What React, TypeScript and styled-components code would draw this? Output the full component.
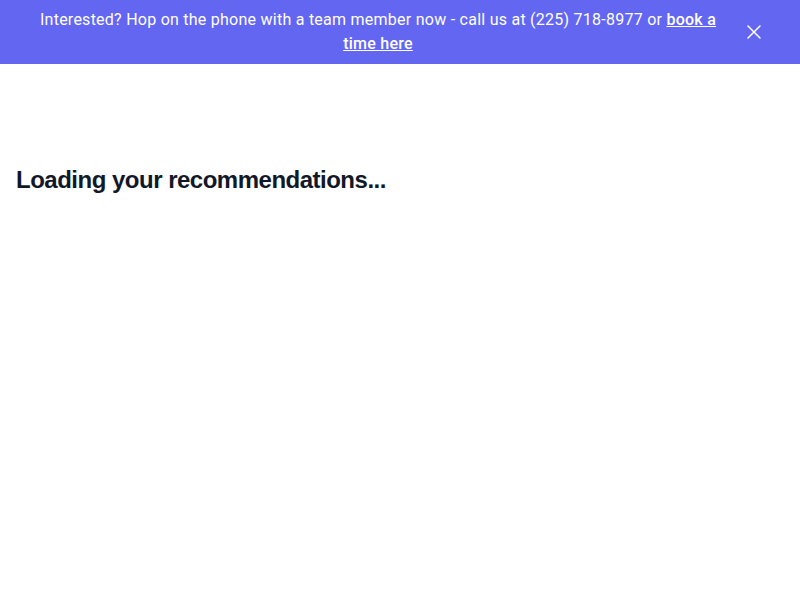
import React, { useState } from "react";
import styled, { createGlobalStyle } from "styled-components";

const GlobalStyle = createGlobalStyle`
  body {
    margin: 0;
    background: #ffffff;
    font-family: Roboto, Inter, "Noto Sans", sans-serif;
  }
`;

const Banner = styled.div`
  display: flex;
  align-items: center;
  height: 64px;
  padding: 0 24px 0 32px;
  background-color: #6366f1;
  color: #ffffff;
  box-sizing: border-box;
`;

const BannerText = styled.p`
  flex: 1;
  margin: 0;
  padding-right: 18px;
  text-align: center;
  font-size: 16px;
  line-height: 24px;
  letter-spacing: 0.25px;

  a {
    color: #ffffff;
    font-weight: 500;
    text-decoration: underline;
  }
`;

const CloseButton = styled.button`
  display: flex;
  align-items: center;
  justify-content: center;
  width: 24px;
  height: 24px;
  padding: 0;
  margin-right: 10px;
  background: none;
  border: none;
  color: #ffffff;
  cursor: pointer;
`;

const Main = styled.main`
  padding: 100px 16px 0;
`;

const Heading = styled.h1`
  margin: 0;
  font-family: "Liberation Sans", Arial, sans-serif;
  font-size: 24px;
  line-height: 32px;
  font-weight: 700;
  letter-spacing: -0.5px;
  color: #111827;
`;

const App: React.FC = () => {
  const [open, setOpen] = useState(true);

  return (
    <>
      <GlobalStyle />
      {open && (
        <Banner>
          <BannerText>
            Interested? Hop on the phone with a team member now - call us at
            (225) 718-8977 or <a href="#">book a time here</a>
          </BannerText>
          <CloseButton onClick={() => setOpen(false)} aria-label="Close">
            <svg width="16" height="16" viewBox="0 0 16 16" fill="none">
              <path
                d="M2 2L14 14M14 2L2 14"
                stroke="currentColor"
                strokeWidth="1.5"
                strokeLinecap="round"
              />
            </svg>
          </CloseButton>
        </Banner>
      )}
      <Main>
        <Heading>Loading your recommendations...</Heading>
      </Main>
    </>
  );
};

export default App;
